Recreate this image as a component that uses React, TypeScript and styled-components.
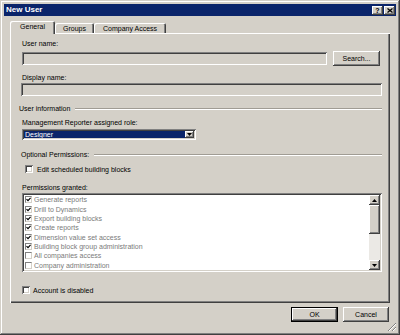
import React from "react";
import styled, { createGlobalStyle } from "styled-components";

const GlobalStyle = createGlobalStyle`
  html, body { margin: 0; padding: 0; background: #d4d0c8; }
  body { font-family: "Liberation Sans", Arial, sans-serif; }
  * { box-sizing: border-box; }
`;

const raised = `box-shadow: inset -1px -1px #404040, inset 1px 1px #ffffff, inset -2px -2px #808080, inset 2px 2px #d4d0c8;`;
const sunken = `box-shadow: inset 1px 1px #808080, inset -1px -1px #ffffff, inset 2px 2px #404040, inset -2px -2px #d4d0c8;`;

const Window = styled.div`
  position: relative;
  width: 400px;
  height: 335px;
  background: #d4d0c8;
  padding: 4px;
  box-shadow: inset -1px -1px #404040, inset 1px 1px #d4d0c8, inset -2px -2px #808080, inset 2px 2px #ffffff;
  display: flex;
  flex-direction: column;
  font-family: "Liberation Sans", Arial, sans-serif;
  font-size: 7px;
  color: #000;
`;

const TitleBar = styled.div`
  height: 12px;
  background: #0a246a;
  display: flex;
  align-items: center;
  padding: 0 1px 0 2px;
`;

const TitleText = styled.div`
  color: #fff;
  font-weight: bold;
  font-size: 8px;
  line-height: 12px;
`;

const TitleButtons = styled.div`
  margin-left: auto;
  display: flex;
  gap: 1px;
`;

const CaptionButton = styled.div`
  width: 11px;
  height: 9px;
  background: #d4d0c8;
  ${raised}
  display: flex;
  align-items: center;
  justify-content: center;
  font-weight: bold;
  font-size: 7px;
  line-height: 9px;
  color: #000;
`;

const Body = styled.div`
  flex: 1;
  display: flex;
  flex-direction: column;
  padding: 5px 6px 0 6px;
`;

const TabStrip = styled.div`
  display: flex;
  align-items: flex-end;
  height: 12px;
  position: relative;
  z-index: 1;
`;

const Tab = styled.div<{ $active?: boolean; $w: number }>`
  width: ${(p) => p.$w}px;
  height: ${(p) => (p.$active ? 13 : 10)}px;
  margin-bottom: ${(p) => (p.$active ? -1 : 0)}px;
  background: #d4d0c8;
  border-radius: 2px 2px 0 0;
  box-shadow: inset 1px 1px #ffffff, inset -1px 0 #404040, inset -2px 0 #808080;
  display: flex;
  align-items: center;
  justify-content: center;
  padding-bottom: ${(p) => (p.$active ? 2 : 0)}px;
  font-size: 7px;
`;

const Panel = styled.div`
  width: 380px;
  height: 270px;
  box-shadow: inset 1px 1px #ffffff, inset -1px -1px #404040, inset -2px -2px #808080;
  padding: 6px 8px 0 9px;
  display: flex;
  flex-direction: column;
`;

const Label = styled.div<{ $mt: number; $ml?: number }>`
  margin-top: ${(p) => p.$mt}px;
  margin-left: ${(p) => p.$ml ?? 3}px;
  height: 9px;
  line-height: 9px;
  white-space: nowrap;
`;

const FieldRow = styled.div`
  margin-top: 3px;
  margin-left: 3px;
  padding-right: 2px;
  height: 15px;
  display: flex;
  align-items: center;
  gap: 6px;
`;

const TextField = styled.div<{ $ml?: number; $mt?: number }>`
  flex: 1;
  height: 13px;
  margin-left: ${(p) => p.$ml ?? 0}px;
  margin-top: ${(p) => p.$mt ?? 0}px;
  background: #d4d0c8;
  ${sunken}
`;

const PushButton = styled.div<{ $w: number; $default?: boolean }>`
  width: ${(p) => p.$w}px;
  height: 15px;
  flex: none;
  background: #d4d0c8;
  ${(p) =>
    p.$default
      ? `border: 1px solid #000; box-shadow: inset -1px -1px #404040, inset 1px 1px #ffffff, inset -2px -2px #808080;`
      : raised}
  display: flex;
  align-items: center;
  justify-content: center;
  font-size: 7px;
  line-height: 13px;
`;

const SectionHeader = styled.div<{ $mt: number; $ml?: number }>`
  margin-top: ${(p) => p.$mt}px;
  margin-left: ${(p) => p.$ml ?? 0}px;
  height: 9px;
  display: flex;
  align-items: center;
  gap: 5px;
  white-space: nowrap;
  line-height: 9px;
`;

const EtchedLine = styled.div`
  flex: 1;
  height: 2px;
  border-top: 1px solid #a09c94;
  border-bottom: 1px solid #ffffff;
  margin-top: 0px;
`;

const Select = styled.div`
  margin-top: 2px;
  margin-left: 3px;
  width: 174px;
  height: 11px;
  background: #fff;
  ${sunken}
  padding: 2px;
  display: flex;
`;

const SelectValue = styled.div`
  flex: 1;
  background: #0a246a;
  color: #fff;
  font-size: 7px;
  line-height: 7px;
  padding-left: 1px;
  overflow: hidden;
`;

const DropButton = styled.div`
  width: 9px;
  background: #d4d0c8;
  ${raised}
  display: flex;
  align-items: center;
  justify-content: center;
`;

const CheckRow = styled.div<{ $mt: number; $ml: number; $gap: number }>`
  margin-top: ${(p) => p.$mt}px;
  margin-left: ${(p) => p.$ml}px;
  height: 10px;
  display: flex;
  align-items: center;
  gap: ${(p) => p.$gap}px;
  white-space: nowrap;
`;

const CheckBox = styled.div<{ $size: number }>`
  width: ${(p) => p.$size}px;
  height: ${(p) => p.$size}px;
  flex: none;
  background: #fff;
  ${sunken}
  display: flex;
  align-items: center;
  justify-content: center;
`;

const ListBox = styled.div`
  margin-top: 1px;
  margin-left: 3px;
  height: 79px;
  background: #fff;
  ${sunken}
  padding: 2px;
  display: flex;
`;

const Items = styled.div`
  flex: 1;
  display: flex;
  flex-direction: column;
  padding-top: 0px;
`;

const Item = styled.div`
  height: 9.45px;
  display: flex;
  align-items: center;
  padding-left: 1px;
  gap: 2px;
  color: #7a7a7a;
  white-space: nowrap;
  font-size: 7px;
`;

const ListCheck = styled.div`
  width: 7px;
  height: 7px;
  flex: none;
  background: #fff;
  border: 1px solid #808080;
  border-right-color: #d4d0c8;
  border-bottom-color: #d4d0c8;
  display: flex;
  align-items: center;
  justify-content: center;
`;

const ScrollBar = styled.div`
  width: 11px;
  display: flex;
  flex-direction: column;
`;

const ScrollBtn = styled.div`
  height: 10px;
  background: #d4d0c8;
  ${raised}
  display: flex;
  align-items: center;
  justify-content: center;
`;

const Thumb = styled.div`
  height: 29px;
  background: #d4d0c8;
  ${raised}
`;

const Track = styled.div`
  flex: 1;
  background: #ebe9e5;
`;

const ButtonRow = styled.div`
  margin-top: 4px;
  height: 15px;
  display: flex;
  justify-content: flex-end;
  gap: 5px;
  padding-right: 1px;
`;

const Grip = styled.svg`
  position: absolute;
  right: 3px;
  bottom: 3px;
`;

const Check = () => (
  <svg width="5" height="5" viewBox="0 0 5 5">
    <path d="M0.5 2.2 L2 3.7 L4.6 0.8" stroke="#000" strokeWidth="1.2" fill="none" />
  </svg>
);

const Arrow = ({ down }: { down?: boolean }) => (
  <svg width="5" height="3" viewBox="0 0 5 3">
    <path d={down ? "M0 0 H5 L2.5 3 Z" : "M0 3 H5 L2.5 0 Z"} fill="#000" />
  </svg>
);

const permissions: [string, boolean][] = [
  ["Generate reports", true],
  ["Drill to Dynamics", true],
  ["Export building blocks", true],
  ["Create reports", true],
  ["Dimension value set access", true],
  ["Building block group administration", true],
  ["All companies access", false],
  ["Company administration", false],
];

export default function App() {
  return (
    <>
      <GlobalStyle />
      <Window>
        <TitleBar>
          <TitleText>New User</TitleText>
          <TitleButtons>
            <CaptionButton>?</CaptionButton>
            <CaptionButton>
              <svg width="6" height="5" viewBox="0 0 6 5">
                <path d="M0.5 0.5 L5.5 4.5 M5.5 0.5 L0.5 4.5" stroke="#000" strokeWidth="1.3" />
              </svg>
            </CaptionButton>
          </TitleButtons>
        </TitleBar>
        <Body>
          <TabStrip>
            <Tab $active $w={45}>General</Tab>
            <Tab $w={39}>Groups</Tab>
            <Tab $w={72}>Company Access</Tab>
          </TabStrip>
          <Panel>
            <Label $mt={0}>User name:</Label>
            <FieldRow>
              <TextField />
              <PushButton $w={47}>Search...</PushButton>
            </FieldRow>
            <Label $mt={7}>Display name:</Label>
            <TextField $ml={2} $mt={1} style={{ flex: "none" }} />
            <SectionHeader $mt={8}>
              User information
              <EtchedLine />
            </SectionHeader>
            <Label $mt={5}>Management Reporter assigned role:</Label>
            <Select>
              <SelectValue>Designer</SelectValue>
              <DropButton>
                <Arrow down />
              </DropButton>
            </Select>
            <SectionHeader $mt={10} $ml={2}>
              Optional Permissions:
              <EtchedLine />
            </SectionHeader>
            <CheckRow $mt={5} $ml={6} $gap={4}>
              <CheckBox $size={8} />
              Edit scheduled building blocks
            </CheckRow>
            <Label $mt={9}>Permissions granted:</Label>
            <ListBox>
              <Items>
                {permissions.map(([name, checked]) => (
                  <Item key={name}>
                    <ListCheck>{checked && <Check />}</ListCheck>
                    {name}
                  </Item>
                ))}
              </Items>
              <ScrollBar>
                <ScrollBtn>
                  <Arrow />
                </ScrollBtn>
                <Thumb />
                <Track />
                <ScrollBtn>
                  <Arrow down />
                </ScrollBtn>
              </ScrollBar>
            </ListBox>
            <CheckRow $mt={13} $ml={3} $gap={3}>
              <CheckBox $size={8} />
              Account is disabled
            </CheckRow>
          </Panel>
          <ButtonRow>
            <PushButton $w={47} $default>OK</PushButton>
            <PushButton $w={46}>Cancel</PushButton>
          </ButtonRow>
        </Body>
        <Grip width="11" height="11" viewBox="0 0 11 11">
          <path d="M10 2 L2 10 M10 6 L6 10 M10 10 L10 10" stroke="#808080" strokeWidth="1" />
          <path d="M10 3 L3 10 M10 7 L7 10" stroke="#ffffff" strokeWidth="1" />
        </Grip>
      </Window>
    </>
  );
}
